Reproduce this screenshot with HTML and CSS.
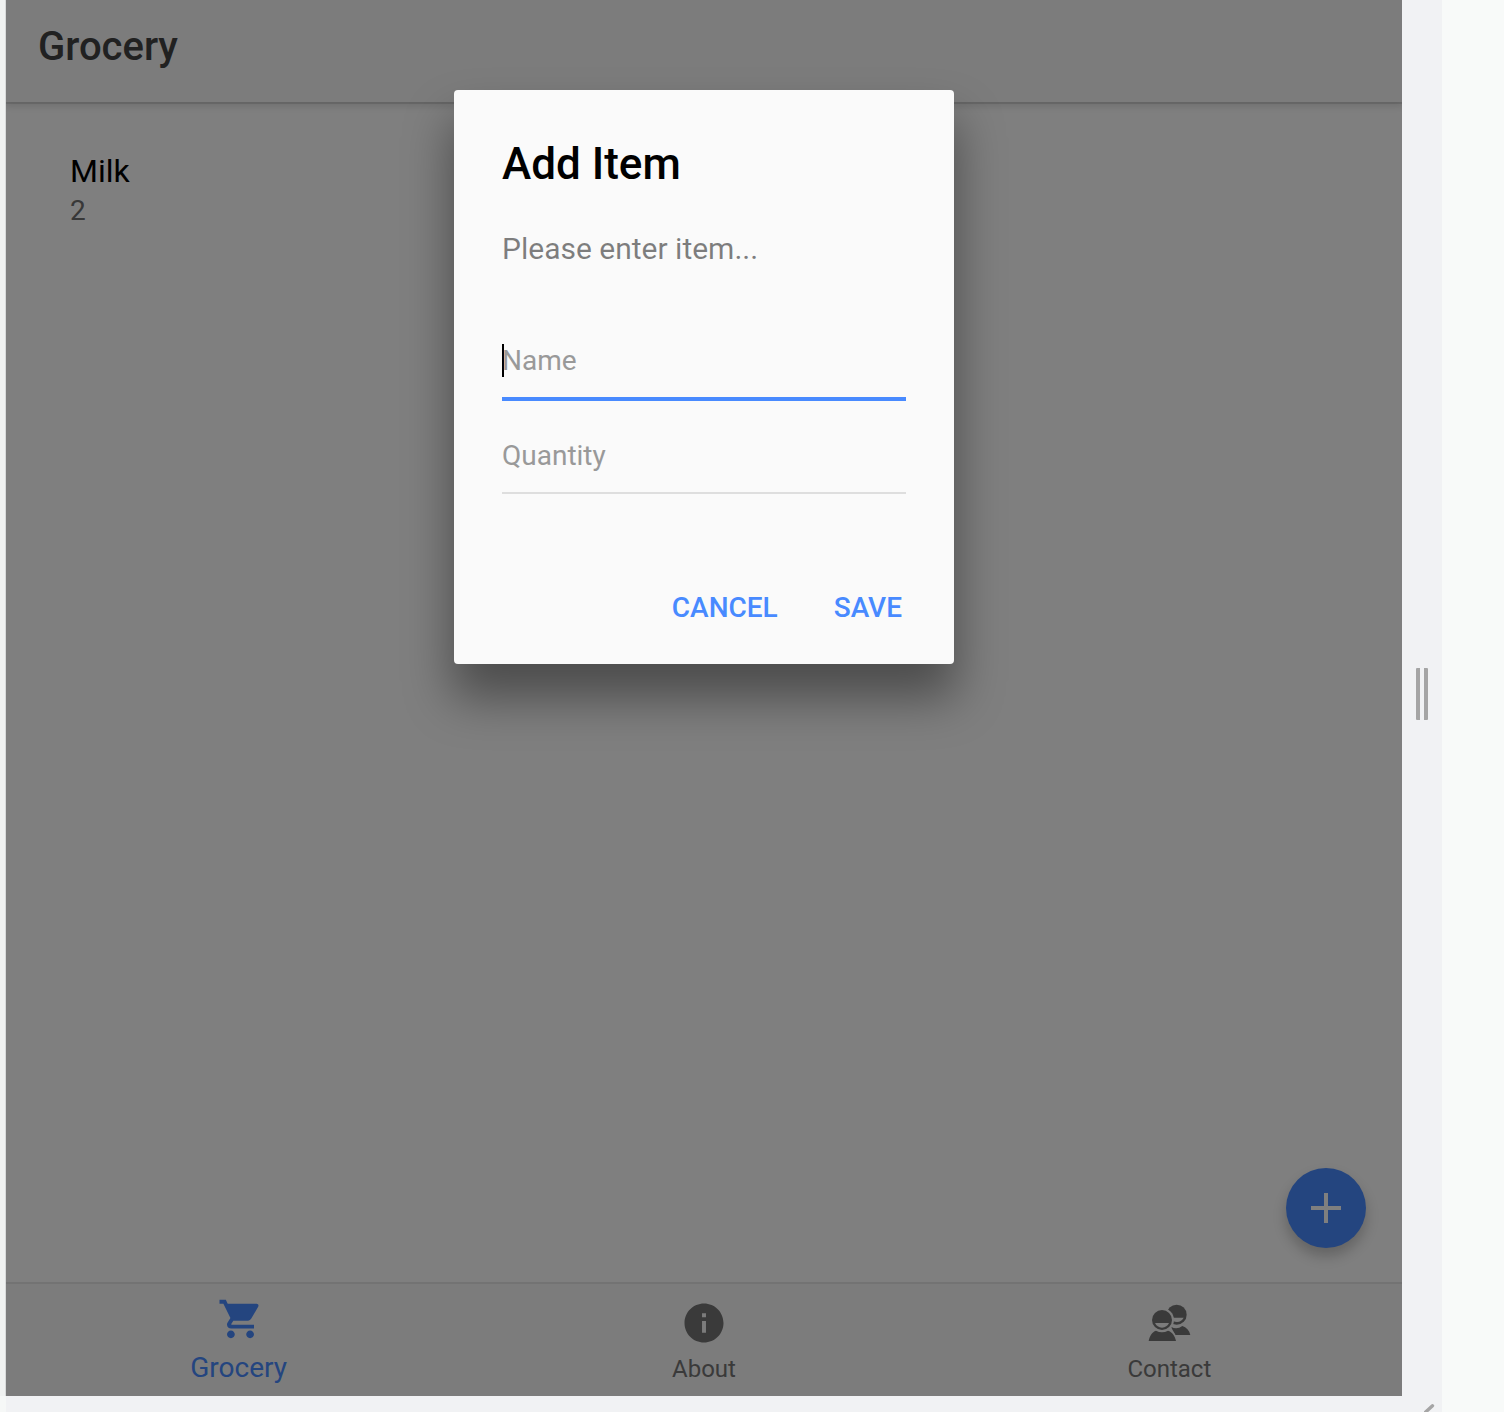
FILE: index.html
```html
<!DOCTYPE html>
<html lang="en">
<head>
<meta charset="utf-8">
<title>Grocery</title>
<link rel="stylesheet" href="styles.css">
</head>
<body>
<div class="workspace">
  <main class="app">
    <header class="header"><h1 class="header-title">Grocery</h1></header>
    <section class="content">
      <div class="item">
        <h2 class="item-name">Milk</h2>
        <p class="item-qty">2</p>
      </div>
      <button class="fab" aria-label="Add">
        <svg width="30" height="30" viewBox="0 0 30 30"><path d="M13 0h4v13h13v4H17v13h-4V17H0v-4h13z" fill="currentColor"/></svg>
      </button>
    </section>
    <nav class="tabs">
      <a class="tab tab-active">
        <svg class="tab-icon" viewBox="0 0 512 512"><path fill="currentColor" d="M169.6 377.6c-22.882 0-41.6 18.718-41.6 41.601 0 22.882 18.718 41.6 41.6 41.6s41.601-18.718 41.601-41.6c-.001-22.884-18.72-41.601-41.601-41.601zM48 51.2v41.6h41.6l74.883 151.682-31.308 50.954c-3.118 5.2-5.2 12.482-5.2 19.765 0 27.85 19.025 41.6 44.825 41.6H416v-40H177.893c-3.118 0-5.2-2.082-5.2-5.2 0-1.036 2.207-5.2 2.207-5.2l20.782-32.8h154.954c15.601 0 29.128-8.317 36.4-21.836l74.882-128.8c1.237-2.461 2.082-6.246 2.082-10.4 0-11.446-9.364-19.765-20.8-19.765H135.364L115.6 51.2H48zm326.399 326.4c-22.882 0-41.6 18.718-41.6 41.601 0 22.882 18.718 41.6 41.6 41.6S416 442.082 416 419.2c0-22.883-18.719-41.6-41.601-41.6z"/></svg>
        <span class="tab-label">Grocery</span>
      </a>
      <a class="tab">
        <svg class="tab-icon" viewBox="0 0 512 512"><path fill="currentColor" d="M256 48C141.2 48 48 141.2 48 256s93.2 208 208 208 208-93.2 208-208S370.8 48 256 48zm21 312h-42V235h42v125zm0-166h-42v-42h42v42z"/></svg>
        <span class="tab-label">About</span>
      </a>
      <a class="tab">
        <svg class="tab-icon" viewBox="0 3 144 144">
          <g fill="currentColor">
            <circle cx="95" cy="50" r="30"/>
            <path d="M78 86q17 10 34 -2c12 4 21 13 24 27H90z"/>
          </g>
          <path class="cutout" d="M76 59h40q-6 12-20 13-14-1-20-13z"/>
          <circle class="cutout" cx="51" cy="66" r="36"/>
          <path class="cutout" d="M74 92q14 8 20 24H70z"/>
          <g fill="currentColor">
            <circle cx="51" cy="66" r="30"/>
            <path d="M33 98q18 9 36 0c13 4 21 16 24 31H11c3-15 10-27 22-31z"/>
          </g>
          <path class="cutout" d="M30 75h42q-6 13-21 14-15-1-21-14z"/>
        </svg>
        <span class="tab-label">Contact</span>
      </a>
    </nav>
    <div class="backdrop">
      <form class="alert">
        <h2 class="alert-title">Add Item</h2>
        <p class="alert-message">Please enter item...</p>
        <div class="field field-focused"><i class="caret"></i>Name</div>
        <div class="field">Quantity</div>
        <div class="actions"><span>CANCEL</span><span>SAVE</span></div>
      </form>
    </div>
  </main>
  <aside class="resizer"><i class="grip"></i>
    <svg class="corner" width="12" height="8" viewBox="0 0 12 8"><path d="M0 9.5L8.5 1.8" fill="none" stroke="#a5a5a5" stroke-width="3.4" stroke-linecap="round"/></svg>
  </aside>
</div>
</body>
</html>
```
FILE: styles.css
```css
* { box-sizing: border-box; }

body {
  margin: 0;
  background: #f8faf9;
  font-family: Roboto, sans-serif;
  overflow: hidden;
}

h1, h2, p { margin: 0; font-weight: 400; }

.workspace {
  display: flex;
  width: 1442px;
  height: 1412px;
  padding-left: 6px;
  background:
    linear-gradient(90deg, #f0f2f1 5px, #d8dada 5px) 0 0 / 6px 1396px no-repeat,
    linear-gradient(90deg, #f6f8f7 6px, #f1f2f4 6px);
}

.app {
  position: relative;
  display: flex;
  flex-direction: column;
  width: 1396px;
  height: 1396px;
  background: #fff;
  overflow: hidden;
}

.header {
  height: 102px;
  padding: 19px 32px 0;
  background: #f8f8f8;
  box-shadow: 0 2px 0 rgba(0, 0, 0, .1), 0 2px 8px 2px rgba(0, 0, 0, .14);
  z-index: 1;
}

.header-title {
  color: #424242;
  font-size: 40px;
  font-weight: 500;
  line-height: 56px;
}

.content {
  position: relative;
  flex: 1;
  padding: 48px 64px;
}

.item-name { font-size: 32px; line-height: 42px; color: #000; }
.item-qty { margin-top: 1px; font-size: 28px; line-height: 36px; color: #707070; }

.fab {
  position: absolute;
  right: 36px;
  bottom: 34px;
  display: grid;
  place-items: center;
  width: 80px;
  height: 80px;
  padding: 0;
  border: 0;
  border-radius: 50%;
  background: #488aff;
  color: #fff;
  box-shadow: 0 8px 12px rgba(0, 0, 0, .14), 0 8px 20px rgba(0, 0, 0, .1);
}

.tabs {
  display: flex;
  height: 114px;
  border-top: 2px solid #e6e6e6;
  background: #f8f8f8;
}

.tab {
  flex: 1;
  display: flex;
  flex-direction: column;
  align-items: center;
  gap: 8px;
  padding-top: 15px;
  color: #757575;
  font-size: 24px;
  line-height: 28px;
}

.tab-active {
  padding-top: 11px;
  color: #488aff;
  font-size: 28px;
  line-height: 34px;
}

.tab-icon { width: 48px; height: 48px; }
.cutout { fill: #f8f8f8; }

.backdrop {
  position: absolute;
  inset: 0;
  z-index: 2;
  padding-top: 90px;
  background: rgba(0, 0, 0, .5);
}

.alert {
  width: 500px;
  height: 574px;
  margin: 0 auto;
  padding: 48px 48px 0;
  border-radius: 4px;
  background: #fafafa;
  box-shadow: 0 32px 48px 2px rgba(0, 0, 0, .4);
}

.alert-title {
  font-size: 44px;
  font-weight: 500;
  line-height: 52px;
}

.alert-message {
  margin: 41px 0 60px;
  color: rgba(0, 0, 0, .5);
  font-size: 30px;
  line-height: 36px;
}

.field {
  display: flex;
  align-items: center;
  height: 74px;
  margin-bottom: 19px;
  border-bottom: 2px solid #dedede;
  color: #999;
  font-size: 28px;
  line-height: 34px;
}

.field-focused { padding-bottom: 2px; border-bottom: 4px solid #488aff; }

.caret { width: 2px; height: 33px; margin: 0 -2px 2px 0; background: #000; }

.actions {
  display: flex;
  justify-content: flex-end;
  gap: 56px;
  padding: 77px 4px 0;
  color: #488aff;
  font-size: 28px;
  font-weight: 500;
  line-height: 36px;
}

.resizer {
  position: relative;
  flex: 1;
  display: flex;
  justify-content: center;
  align-items: flex-start;
  padding-top: 668px;
}

.grip {
  width: 12px;
  height: 52px;
  border-radius: 1px;
  background: linear-gradient(90deg, #a5a5a5 4px, transparent 4px, transparent 8px, #a5a5a5 8px);
}

.corner { position: absolute; left: 22px; bottom: 0; }
```
